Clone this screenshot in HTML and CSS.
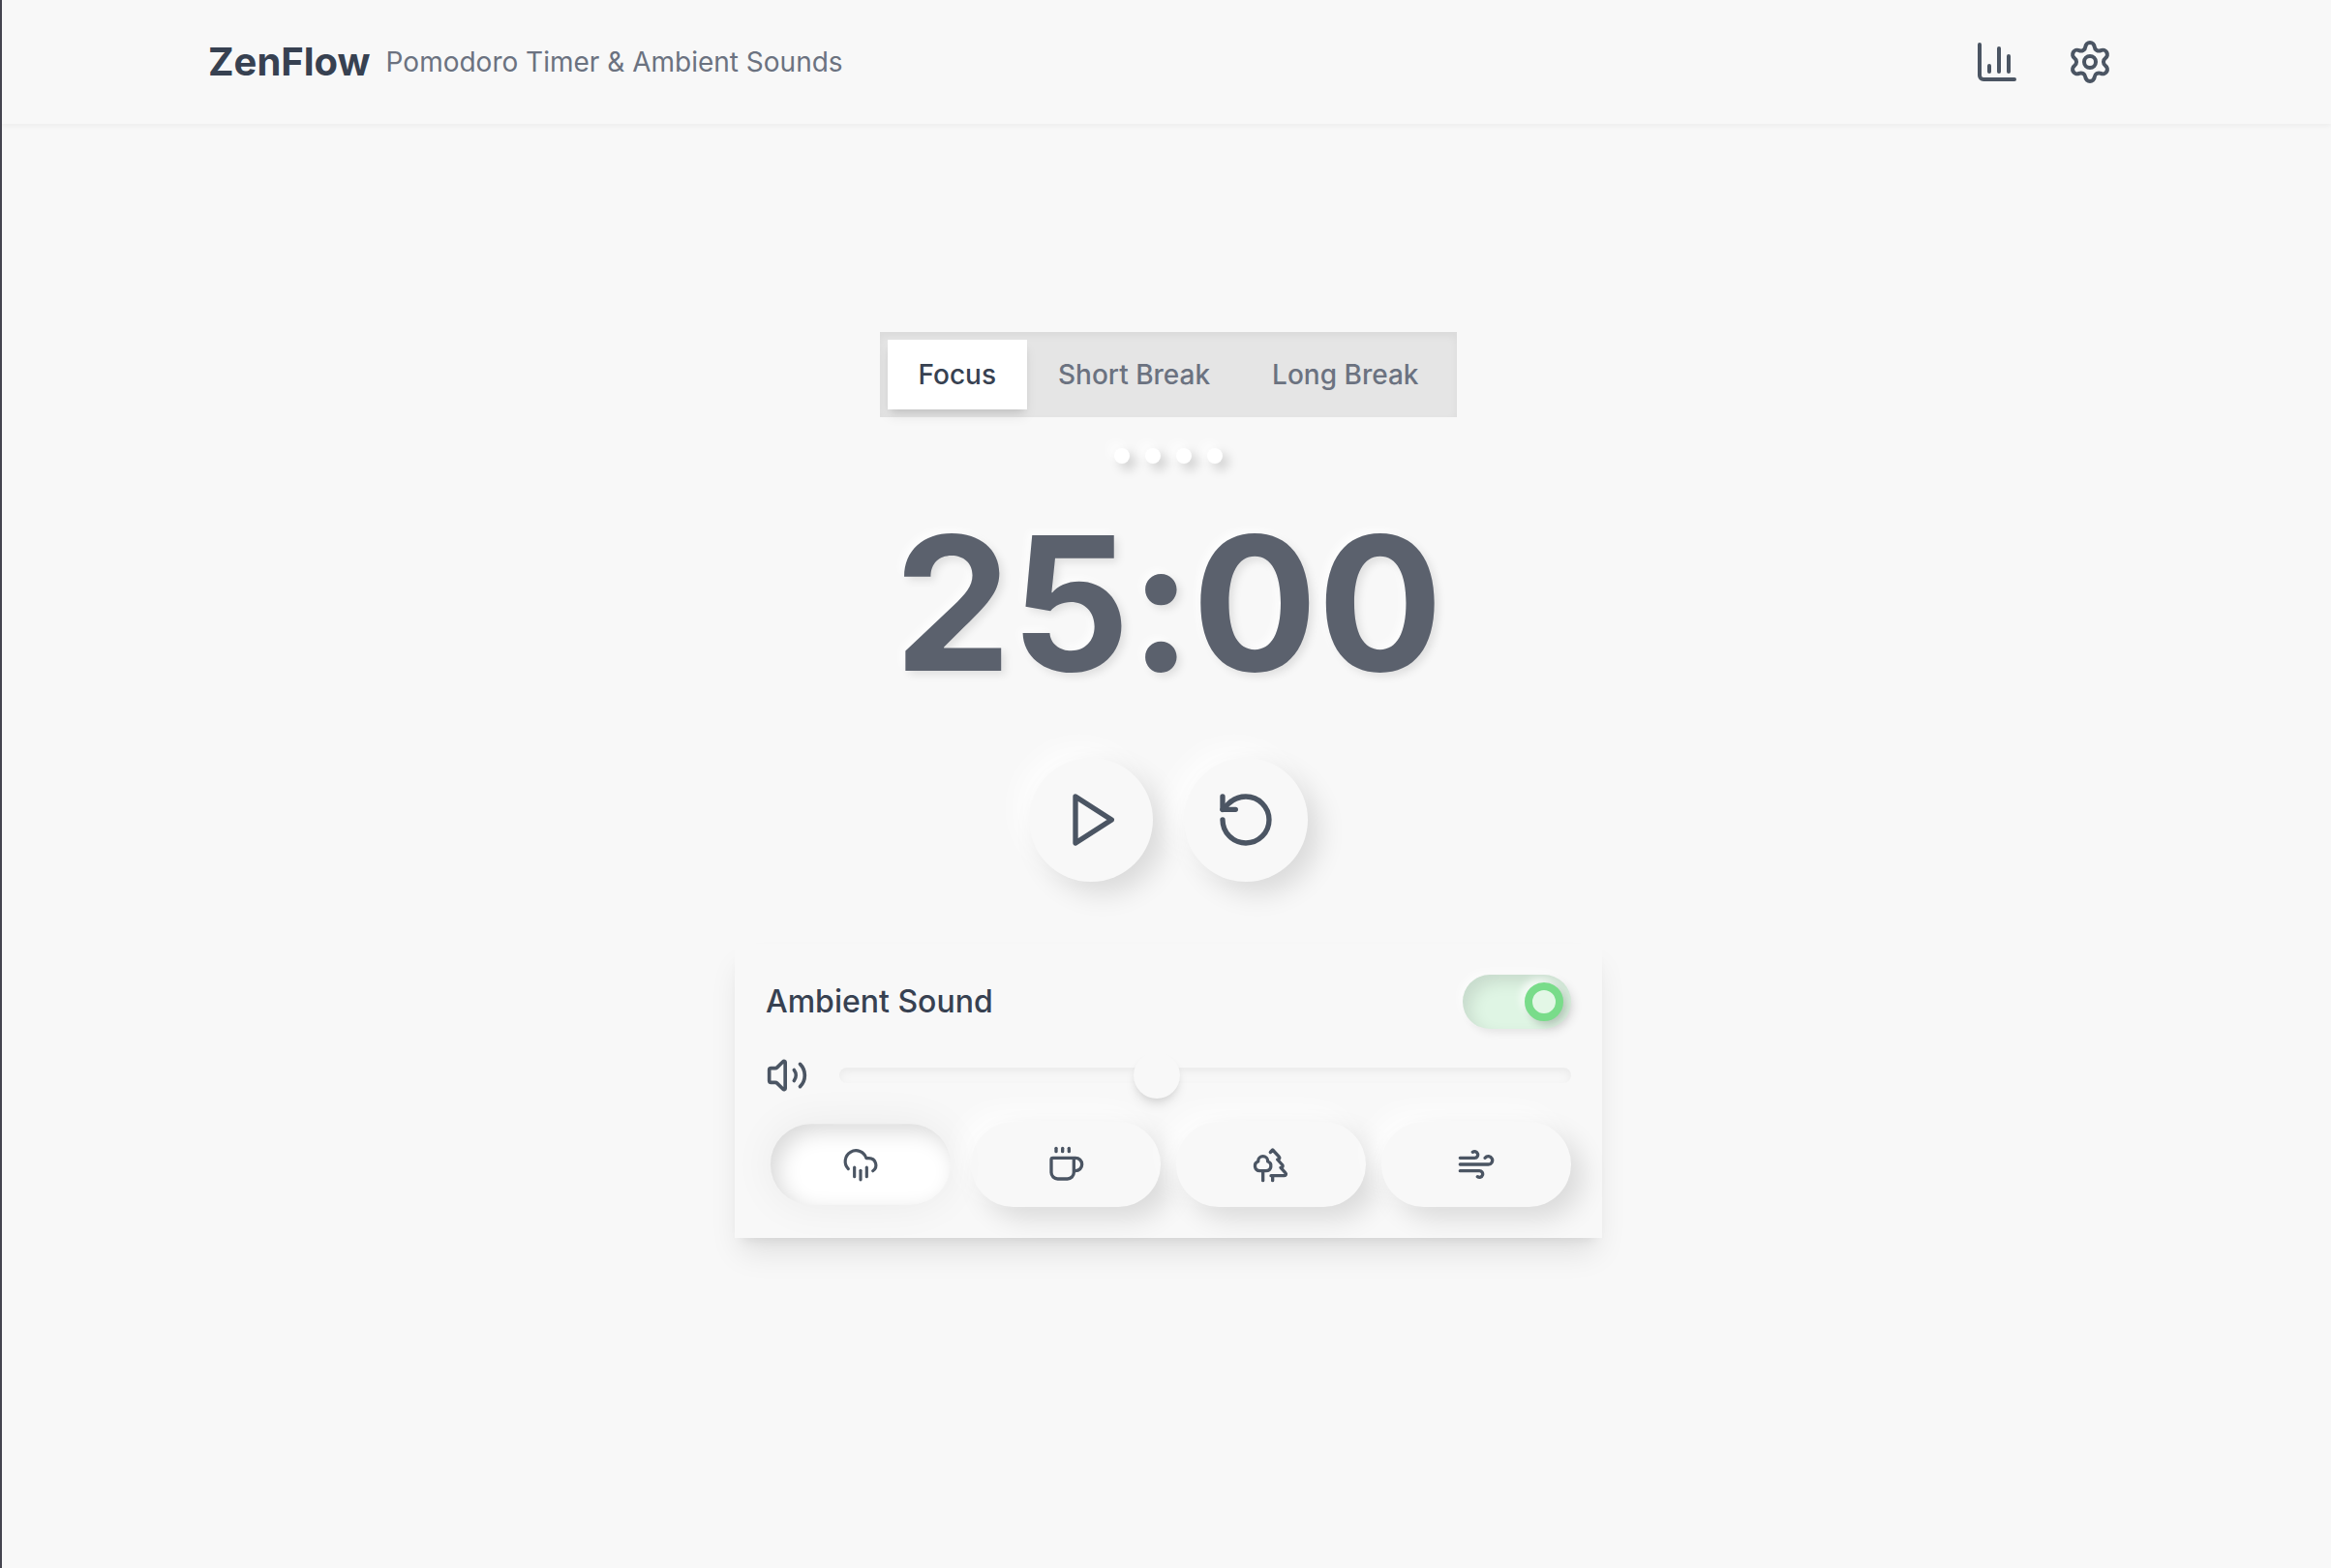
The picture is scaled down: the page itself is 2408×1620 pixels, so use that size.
FILE: index.html
```html
<!DOCTYPE html>
<html lang="en">
<head>
    <meta charset="UTF-8">
    <meta name="viewport" content="width=device-width, initial-scale=1.0">
    <title>ZenFlow - Pomodoro Timer &amp; Ambient Sounds</title>
    <link rel="stylesheet" href="styles.css">
</head>
<body>
    <header class="header">
        <div class="header-inner">
            <h1 class="logo">ZenFlow</h1>
            <p class="tagline">Pomodoro Timer &amp; Ambient Sounds</p>
            <nav class="header-actions">
                <button class="icon-button" type="button" aria-label="Statistics">
                    <svg class="icon" viewBox="0 0 24 24"><path d="M3 3v16a2 2 0 0 0 2 2h16"/><path d="M18 17V9"/><path d="M13 17V5"/><path d="M8 17v-3"/></svg>
                </button>
                <button class="icon-button" type="button" aria-label="Settings">
                    <svg class="icon" viewBox="0 0 24 24"><path d="M9.671 4.136a2.34 2.34 0 0 1 4.659 0 2.34 2.34 0 0 0 3.319 1.915 2.34 2.34 0 0 1 2.33 4.033 2.34 2.34 0 0 0 0 3.831 2.34 2.34 0 0 1-2.33 4.033 2.34 2.34 0 0 0-3.319 1.915 2.34 2.34 0 0 1-4.659 0 2.34 2.34 0 0 0-3.32-1.915 2.34 2.34 0 0 1-2.33-4.033 2.34 2.34 0 0 0 0-3.831A2.34 2.34 0 0 1 6.35 6.051a2.34 2.34 0 0 0 3.319-1.915"/><circle cx="12" cy="12" r="3"/></svg>
                </button>
            </nav>
        </div>
    </header>

    <main class="main">
        <div class="tabs" role="tablist">
            <button class="tab tab-active" type="button" role="tab" aria-selected="true">Focus</button>
            <button class="tab" type="button" role="tab" aria-selected="false">Short Break</button>
            <button class="tab" type="button" role="tab" aria-selected="false">Long Break</button>
        </div>

        <div class="sessions">
            <span class="dot"></span>
            <span class="dot"></span>
            <span class="dot"></span>
            <span class="dot"></span>
        </div>

        <div class="timer" role="timer">25:00</div>

        <div class="controls">
            <button class="round-button" type="button" aria-label="Start">
                <svg class="icon icon-lg" viewBox="0 0 24 24"><polygon points="6 3 20 12 6 21 6 3"/></svg>
            </button>
            <button class="round-button" type="button" aria-label="Reset">
                <svg class="icon icon-lg" viewBox="0 0 24 24"><path d="M3 12a9 9 0 1 0 9-9 9.75 9.75 0 0 0-6.74 2.74L3 8"/><path d="M3 3v5h5"/></svg>
            </button>
        </div>

        <section class="card">
            <div class="card-head">
                <label class="card-title" for="ambient">Ambient Sound</label>
                <input class="toggle" type="checkbox" id="ambient" checked>
            </div>

            <div class="volume">
                <svg class="icon icon-volume" viewBox="0 0 24 24"><path d="M11 4.702a.705.705 0 0 0-1.203-.498L6.413 7.587A1.4 1.4 0 0 1 5.416 8H3a1 1 0 0 0-1 1v6a1 1 0 0 0 1 1h2.416a1.4 1.4 0 0 1 .997.413l3.383 3.384A.705.705 0 0 0 11 19.298z"/><path d="M16 9a5 5 0 0 1 0 6"/><path d="M19.364 18.364a9 9 0 0 0 0-12.728"/></svg>
                <input class="slider" type="range" min="0" max="100" value="43" aria-label="Volume">
            </div>

            <div class="sounds">
                <button class="sound sound-active" type="button" aria-label="Rain">
                    <svg class="icon icon-sm" viewBox="0 0 24 24"><path d="M4 14.899A7 7 0 1 1 15.71 8h1.79a4.5 4.5 0 0 1 2.5 8.242"/><path d="M16 14v6"/><path d="M8 14v6"/><path d="M12 16v6"/></svg>
                </button>
                <button class="sound" type="button" aria-label="Cafe">
                    <svg class="icon icon-sm" viewBox="0 0 24 24"><path d="M10 2v2"/><path d="M14 2v2"/><path d="M16 8a1 1 0 0 1 1 1v8a4 4 0 0 1-4 4H7a4 4 0 0 1-4-4V9a1 1 0 0 1 1-1h14a4 4 0 1 1 0 8h-1"/><path d="M6 2v2"/></svg>
                </button>
                <button class="sound" type="button" aria-label="Forest">
                    <svg class="icon icon-sm" viewBox="0 0 24 24"><path d="M10 10v.2A3 3 0 0 1 8.9 16H5a3 3 0 0 1-1-5.8V10a3 3 0 0 1 6 0Z"/><path d="M7 16v6"/><path d="M13 19v3"/><path d="M12 19h8.3a1 1 0 0 0 .7-1.7L18 14h.3a1 1 0 0 0 .7-1.7L16 9h.2a1 1 0 0 0 .8-1.7L13 3l-1.4 1.5"/></svg>
                </button>
                <button class="sound" type="button" aria-label="Wind">
                    <svg class="icon icon-sm" viewBox="0 0 24 24"><path d="M12.8 19.6A2 2 0 1 0 14 16H2"/><path d="M17.5 8a2.5 2.5 0 1 1 2 4H2"/><path d="M9.8 4.4A2 2 0 1 1 11 8H2"/></svg>
                </button>
            </div>
        </section>
    </main>
</body>
</html>
```
FILE: styles.css
```css
*, *::before { box-sizing: border-box; }

body {
  margin: 0;
  min-height: 100vh;
  border-left: 2px solid #45454f;
  background: #f8f8f8;
  color: #374151;
  font-family: Inter, "Liberation Sans", sans-serif;
}

button { border: none; background: none; padding: 0; font: inherit; color: inherit; cursor: pointer; }

.icon {
  display: block;
  width: 48px;
  height: 48px;
  fill: none;
  stroke: #4b5563;
  stroke-width: 2;
  stroke-linecap: round;
  stroke-linejoin: round;
}
.icon-sm { width: 40px; height: 40px; }
.icon-lg { width: 64px; height: 64px; }
.icon-volume { width: 44px; height: 44px; flex: none; }

/* header */
.header { padding: 24px 0 24px 4px; box-shadow: 0 2px 6px rgba(0, 0, 0, 0.05); }
.header-inner { display: flex; align-items: center; gap: 16px; max-width: 1984px; margin: 0 auto; }
.logo { margin: 0; font-size: 40px; line-height: 56px; font-weight: 700; }
.tagline { margin: 0; font-size: 28px; line-height: 40px; color: #6b7280; }
.header-actions { display: flex; gap: 16px; margin-left: auto; }
.icon-button { padding: 16px; }

/* timer */
.main { display: flex; flex-direction: column; align-items: center; padding: 215px 0 64px 4px; }

.tabs { display: flex; padding: 8px; background: #e5e5e5; box-shadow: inset 0 4px 8px rgba(0, 0, 0, 0.05); }
.tab { padding: 16px 32px; font-size: 28px; line-height: 40px; font-weight: 500; color: #6b7280; }
.tab-active {
  background: #fff;
  color: #374151;
  box-shadow: 0 8px 12px -2px rgba(0, 0, 0, 0.1), 0 4px 8px -4px rgba(0, 0, 0, 0.1);
}

.sessions { display: flex; gap: 16px; margin-top: 32px; }
.dot {
  width: 16px;
  height: 16px;
  border-radius: 50%;
  background: #fff;
  box-shadow: 6px 6px 12px rgba(0, 0, 0, 0.18), -6px -6px 12px rgba(255, 255, 255, 0.8);
}

.timer {
  margin-top: 48px;
  font-size: 192px;
  line-height: 192px;
  font-weight: 700;
  font-feature-settings: "calt" 0; /* keep the colon on the baseline */
  color: #5b616d;
  text-shadow: 4px 4px 8px rgba(0, 0, 0, 0.1), -4px -4px 8px rgba(255, 255, 255, 0.8);
}

.controls { display: flex; gap: 32px; margin-top: 64px; }
.round-button {
  display: grid;
  place-items: center;
  width: 128px;
  height: 128px;
  border-radius: 50%;
  background: #f8f8f8;
  box-shadow: 12px 12px 28px rgba(0, 0, 0, 0.12), -12px -12px 28px rgba(255, 255, 255, 0.8);
}

/* ambient sound */
.card {
  display: flex;
  flex-direction: column;
  gap: 24px;
  width: 100%;
  max-width: 896px;
  margin-top: 64px;
  padding: 32px;
  background: #f8f8f8;
  box-shadow: 0 20px 30px -6px rgba(0, 0, 0, 0.1), 0 8px 12px -8px rgba(0, 0, 0, 0.1);
}
.card-head { display: flex; align-items: center; justify-content: space-between; }
.card-title { font-size: 32px; line-height: 48px; font-weight: 500; }

.toggle {
  appearance: none;
  display: flex;
  justify-content: flex-end;
  width: 112px;
  height: 56px;
  margin: 0;
  padding: 8px;
  border-radius: 28px;
  background: #dff5e4;
  box-shadow: inset 8px 8px 16px rgba(0, 0, 0, 0.1), 4px 4px 8px rgba(0, 0, 0, 0.08), -4px -4px 8px rgba(255, 255, 255, 0.6);
}
.toggle::before {
  content: "";
  width: 40px;
  height: 40px;
  border: 8px solid #79dc8a;
  border-radius: 50%;
  background: #e3f7e6;
  box-shadow: 4px 4px 8px rgba(0, 0, 0, 0.2), -4px -4px 8px rgba(255, 255, 255, 0.8);
}
.toggle:not(:checked) { justify-content: flex-start; }

.volume { display: flex; align-items: center; gap: 32px; height: 48px; }
.slider {
  appearance: none;
  flex: 1;
  min-width: 0;
  height: 16px;
  margin: 0;
  border-radius: 8px;
  background: #f7f7f7;
  box-shadow: inset 0 4px 8px rgba(0, 0, 0, 0.05);
}
.slider::-webkit-slider-thumb {
  appearance: none;
  width: 48px;
  height: 48px;
  border-radius: 50%;
  background: #f8f8f8;
  box-shadow: 0 8px 12px -2px rgba(0, 0, 0, 0.1), 0 4px 8px -4px rgba(0, 0, 0, 0.1);
}

.sounds { display: grid; grid-template-columns: repeat(4, 1fr); gap: 16px; }
.sound {
  display: grid;
  place-items: center;
  height: 88px;
  border-radius: 44px;
  background: #f8f8f8;
  box-shadow: 12px 12px 28px rgba(0, 0, 0, 0.12), -12px -12px 28px rgba(255, 255, 255, 0.8);
}
.sound-active {
  transform: scale(0.95);
  background: #fff;
  box-shadow: inset 8px 8px 24px rgba(0, 0, 0, 0.15), 0 0 48px rgba(0, 0, 0, 0.06);
}
```
